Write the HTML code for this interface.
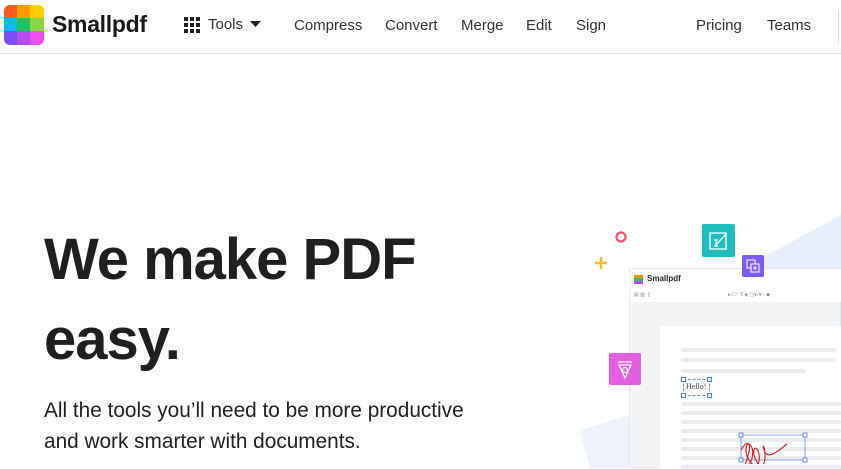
<!DOCTYPE html>
<html><head><style>
*{margin:0;padding:0;box-sizing:border-box}
body{width:841px;height:468px;overflow:hidden;background:#fff;font-family:"Liberation Sans",sans-serif;position:relative;color:#1f1f1f}
.nav{position:absolute;left:0;top:0;width:841px;height:54px;border-bottom:1px solid #e6e6e6}
.nav span{position:absolute;top:17px;font-size:15px;color:#333}
.abs{position:absolute}
.line{position:absolute;height:4px;background:#ececf0;border-radius:2px}
.h{position:absolute;width:5px;height:5px;border:1px solid #4a7be0;background:#fff}
</style></head><body>
<div class="nav">
 <svg class="abs" style="left:4px;top:5px" width="40" height="40" viewBox="0 0 40 40">
  <clipPath id="c"><rect width="40" height="40" rx="6"/></clipPath>
  <g clip-path="url(#c)">
  <rect x="0" y="0" width="14" height="14" fill="#ff5a1f"/><rect x="13" y="0" width="14" height="14" fill="#ff9a00"/><rect x="26" y="0" width="14" height="14" fill="#ffcc00"/>
  <rect x="0" y="13" width="14" height="14" fill="#13b6f5"/><rect x="13" y="13" width="14" height="14" fill="#1ec45f"/><rect x="26" y="13" width="14" height="14" fill="#8ad84a"/>
  <rect x="0" y="26" width="14" height="14" fill="#7b4ff2"/><rect x="13" y="26" width="14" height="14" fill="#b44ef2"/><rect x="26" y="26" width="14" height="14" fill="#f04ef2"/>
  </g></svg>
 <div class="abs" style="left:52px;top:11px;font-size:23px;font-weight:bold;color:#1a1a1a;letter-spacing:-0.3px">Smallpdf</div>
 <svg class="abs" style="left:184px;top:17px" width="16" height="16"><g fill="#222"><rect x="0" y="0" width="4" height="4"/><rect x="6" y="0" width="4" height="4"/><rect x="12" y="0" width="4" height="4"/><rect x="0" y="6" width="4" height="4"/><rect x="6" y="6" width="4" height="4"/><rect x="12" y="6" width="4" height="4"/><rect x="0" y="12" width="4" height="4"/><rect x="6" y="12" width="4" height="4"/><rect x="12" y="12" width="4" height="4"/></g></svg>
 <span style="left:208px;top:16px">Tools</span>
 <svg class="abs" style="left:250px;top:21px" width="11" height="6"><path d="M0 0h11L5.5 6z" fill="#222"/></svg>
 <span style="left:294px">Compress</span>
 <span style="left:385px">Convert</span>
 <span style="left:461px">Merge</span>
 <span style="left:526px">Edit</span>
 <span style="left:576px">Sign</span>
 <span style="left:696px">Pricing</span>
 <span style="left:767px">Teams</span>
 <div class="abs" style="left:838px;top:10px;width:1px;height:34px;background:#ddd"></div>
</div>
<div class="abs" style="left:44px;top:220px;font-size:58px;font-weight:bold;line-height:80px;color:#1f1f1f;letter-spacing:-1px">We make PDF<br>easy.</div>
<div class="abs" style="left:44px;top:395px;font-size:20.8px;line-height:31px;color:#222;letter-spacing:0">All the tools you’ll need to be more productive<br>and work smarter with documents.</div>
<svg class="abs" style="left:560px;top:200px" width="281" height="268">
 <polygon points="281,15 281,70 180,70" fill="#e8eefb"/>
 <polygon points="20,230 120,200 130,268 30,268" fill="#eef2fb"/>
 <circle cx="61" cy="37" r="4.5" fill="none" stroke="#f2566e" stroke-width="2.2"/>
 <path d="M41 57v12M35 63h12" stroke="#fbbf24" stroke-width="2.5"/>
</svg>
<div class="abs" style="left:629px;top:268px;width:212px;height:200px;background:#f4f4f6;border:1px solid #e6e8ef"></div>
<div class="abs" style="left:630px;top:269px;width:211px;height:33px;background:#fff"></div>
<svg class="abs" style="left:634px;top:275px" width="9" height="9"><rect width="9" height="3" fill="#ff8a00"/><rect y="3" width="9" height="3" fill="#1ec45f"/><rect y="6" width="9" height="3" fill="#b44ef2"/></svg>
<div class="abs" style="left:647px;top:274px;font-size:8px;font-weight:bold;color:#222">Smallpdf</div>
<div class="abs" style="left:634px;top:292px;width:30px;height:6px;font-size:5px;color:#888">▤ ▥ &nbsp;▯</div>
<div class="abs" style="left:728px;top:292px;width:113px;font-size:5px;color:#888;white-space:nowrap">▸ ⁄ ⁄ ⁄ &nbsp;T ◈ ▢▾ ⁄▾ ▫ ◆</div>
<div class="abs" style="left:660px;top:326px;width:181px;height:142px;background:#fff"></div>
<div class="line" style="left:681px;top:348px;width:155px"></div>
<div class="line" style="left:681px;top:358px;width:155px"></div>
<div class="line" style="left:681px;top:369px;width:125px"></div>
<div class="line" style="left:681px;top:402px;width:160px"></div>
<div class="line" style="left:681px;top:411px;width:160px"></div>
<div class="line" style="left:681px;top:420px;width:160px"></div>
<div class="line" style="left:681px;top:429px;width:160px"></div>
<div class="line" style="left:681px;top:438px;width:160px"></div>
<div class="line" style="left:681px;top:447px;width:160px"></div>
<div class="line" style="left:681px;top:456px;width:160px"></div>
<div class="line" style="left:681px;top:465px;width:160px"></div>
<div class="abs" style="left:683px;top:379px;width:27px;height:17px;border:1px dashed #6b8fe6;font-family:'Liberation Serif',serif;font-size:8px;color:#444;padding:2px 0 0 2px;background:#fff">Hello!</div>
<div class="h" style="left:681px;top:377px"></div><div class="h" style="left:707px;top:377px"></div><div class="h" style="left:681px;top:393px"></div><div class="h" style="left:707px;top:393px"></div>
<svg class="abs" style="left:738px;top:432px" width="72" height="32">
 <rect x="3" y="3" width="64" height="25" fill="none" stroke="#6b8fe6" stroke-width="0.8"/>
 <path d="M3 18c6-10 10-8 8 2s-6 14-2 14 8-14 4-20-8 4-2 14 12 4 10-6-8-6-4 4 10 10 10-2-4-12 0-4 14-2 22-8 22-8" fill="none" stroke="#d01e1e" stroke-width="1.1"/>
 <rect x="1" y="1" width="4" height="4" fill="#fff" stroke="#4a7be0" stroke-width=".8"/><rect x="65" y="1" width="4" height="4" fill="#fff" stroke="#4a7be0" stroke-width=".8"/><rect x="1" y="26" width="4" height="4" fill="#fff" stroke="#4a7be0" stroke-width=".8"/><rect x="65" y="26" width="4" height="4" fill="#fff" stroke="#4a7be0" stroke-width=".8"/>
</svg>
<svg class="abs" style="left:702px;top:224px" width="33" height="33"><rect width="33" height="33" rx="2" fill="#1fbdbd"/><rect x="8" y="9" width="16" height="16" fill="none" stroke="#fff" stroke-width="1.3"/><path d="M14 21l10-11M12 16h4M14 16v6M12 22h4" stroke="#fff" stroke-width="1.3"/></svg>
<svg class="abs" style="left:742px;top:255px" width="22" height="22"><rect width="22" height="22" rx="2" fill="#7a5cf0"/><rect x="5" y="5" width="8" height="8" fill="none" stroke="#fff"/><rect x="9" y="9" width="8" height="8" fill="#7a5cf0" stroke="#fff"/><path d="M13 11v4M11 13h4" stroke="#fff"/></svg>
<svg class="abs" style="left:609px;top:353px" width="32" height="32"><rect width="32" height="32" rx="2" fill="#e35fe0"/><path d="M9 9h14M10 12h12l-6 13z" fill="none" stroke="#fff" stroke-width="1.3"/><circle cx="16" cy="17" r="2.5" fill="none" stroke="#fff" stroke-width="1.2"/></svg>
</body></html>
